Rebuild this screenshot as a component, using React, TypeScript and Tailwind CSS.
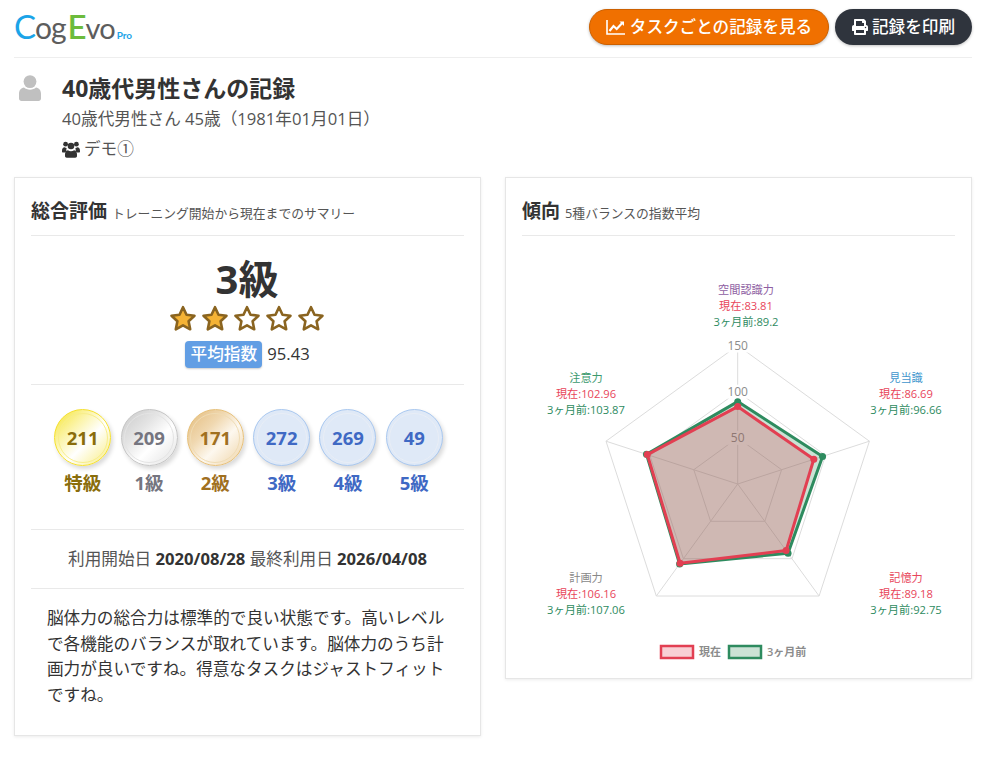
import { FaPrint } from 'react-icons/fa';

const font = { fontFamily: '"Open Sans", "Noto Sans CJK JP", sans-serif' };

const medals = [
  { count: 211, label: '特級', color: 'text-[#8a6d0b]', ring: 'border-[#f5e02c]', inner: 'border-[#f8ee8a]', bg: 'bg-[linear-gradient(135deg,#f6e431_0%,#fbf3a0_30%,#ffffff_58%,#f8ec7a_100%)]' },
  { count: 209, label: '1級', color: 'text-[#75757f]', ring: 'border-[#c4c4c4]', inner: 'border-[#e4e4e4]', bg: 'bg-[linear-gradient(135deg,#c8c8c8_0%,#e4e4e4_35%,#ffffff_60%,#e0e0e0_100%)]' },
  { count: 171, label: '2級', color: 'text-[#a0701f]', ring: 'border-[#e6bf78]', inner: 'border-[#f0dcb4]', bg: 'bg-[linear-gradient(135deg,#e3bb7c_0%,#f0d8b0_35%,#fdf8ef_60%,#eed2a3_100%)]' },
  { count: 272, label: '3級', color: 'text-[#3f69c4]', ring: 'border-[#a9c8f0]', inner: 'border-[#e9eef6]', bg: 'bg-[#dfe9f7]' },
  { count: 269, label: '4級', color: 'text-[#3f69c4]', ring: 'border-[#a9c8f0]', inner: 'border-[#e9eef6]', bg: 'bg-[#dfe9f7]' },
  { count: 49, label: '5級', color: 'text-[#3f69c4]', ring: 'border-[#a9c8f0]', inner: 'border-[#e9eef6]', bg: 'bg-[#dfe9f7]' },
];

const Star = ({ filled }: { filled: boolean }) => (
  <svg width="32" height="28" viewBox="0 0 32 28">
    <path
      d="M16 3.2l3.5 7.5 8 1-5.9 5.6 1.6 8-7.2-4-7.2 4 1.6-8-5.9-5.6 8-1z"
      fill={filled ? '#f5b335' : '#ffffff'}
      stroke="#8a6420"
      strokeWidth="2.6"
      strokeLinejoin="round"
    />
  </svg>
);

const UserIcon = () => (
  <svg width="22" height="26" viewBox="0 0 22 26" fill="#c0c0c0">
    <circle cx="11" cy="6.6" r="6.4" />
    <path d="M5 12.5c1.6 1.4 3.6 2.2 6 2.2s4.400-.8 6-2.200c3 .4 5 2.800 5 6.300v4.700c0 1.400-1.100 2.500-2.500 2.500h-17c-1.400 0-2.500-1.100-2.500-2.500v-4.700c0-3.500 2-5.900 5-6.300z" />
  </svg>
);

const GroupIcon = () => (
  <svg width="18" height="17" viewBox="0 0 18 17" fill="#333333">
    <circle cx="3.6" cy="3.2" r="2.4" />
    <circle cx="14.400" cy="3.200" r="2.400" />
    <circle cx="9" cy="5" r="3.300" />
    <path d="M0 10c0-2.400 1-3.700 2.600-3.700.6.500 1.300.7 2 .8-.4 1-.4 2.200-.2 3.400-.6.300-1.200.7-1.600 1.100H1c-.6 0-1-.5-1-1.100z" />
    <path d="M18 10c0-2.400-1-3.700-2.600-3.700-.6.500-1.300.7-2 .8.400 1 .4 2.200.2 3.400.6.300 1.200.700 1.600 1.100H17c.6 0 1-.5 1-1.100z" />
    <path d="M5.900 9.300c.9.700 2 1 3.100 1s2.200-.3 3.100-1c1.900.2 2.900 1.800 2.900 4.200v1.600c0 1-.8 1.700-1.700 1.700H4.700c-.9 0-1.700-.7-1.700-1.700v-1.600c0-2.400 1-4 2.900-4.200z" />
  </svg>
);

const LineChartIcon = () => (
  <svg width="19" height="15" viewBox="0 0 19 15" fill="none" stroke="#ffffff">
    <path d="M1 0v14h18" strokeWidth="1.600" />
    <path d="M3.500 11l4-5 3.200 3 6-6.500" strokeWidth="2.200" />
    <path d="M13.500 1.500h4.500v4.500z" fill="#ffffff" stroke="none" />
  </svg>
);

const cx = 231.7;
const cy = 248;
const perUnit = 138.5 / 150;

const point = (i: number, value: number) => {
  const a = (-90 + i * 72) * (Math.PI / 180);
  const r = value * perUnit;
  return [cx + r * Math.cos(a), cy + r * Math.sin(a)];
};
const poly = (vals: number[]) => vals.map((v, i) => point(i, v).map((n) => n.toFixed(1)).join(',')).join(' ');

const current = [83.81, 86.69, 89.18, 106.16, 102.96];
const before = [89.2, 96.66, 92.75, 107.06, 103.87];

const axisLabels = [
  { x: 240, y: 58, name: '空間認識力', color: '#8e5ea2', a: '現在:83.81', b: '3ヶ月前:89.2' },
  { x: 400, y: 146, name: '見当識', color: '#3e95cd', a: '現在:86.69', b: '3ヶ月前:96.66' },
  { x: 400, y: 346, name: '記憶力', color: '#e8455a', a: '現在:89.18', b: '3ヶ月前:92.75' },
  { x: 80, y: 346, name: '計画力', color: '#888888', a: '現在:106.16', b: '3ヶ月前:107.06' },
  { x: 80, y: 146, name: '注意力', color: '#3c9a6e', a: '現在:102.96', b: '3ヶ月前:103.87' },
];

const RadarChart = () => (
  <svg width="465" height="442" viewBox="0 0 465 442" className="block" style={font}>
    {[50, 100, 150].map((v) => (
      <polygon key={v} points={poly([v, v, v, v, v])} fill="none" stroke="#dcdcdc" strokeWidth="1" />
    ))}
    {[0, 1, 2, 3, 4].map((i) => {
      const [x, y] = point(i, 150);
      return <line key={i} x1={cx} y1={cy} x2={x} y2={y} stroke="#dcdcdc" strokeWidth="1" />;
    })}
    {[50, 100, 150].map((v) => (
      <g key={v}>
        <rect x={cx - 12} y={cy - v * perUnit - 7} width="24" height="14" fill="#ffffff" />
        <text x={cx} y={cy - v * perUnit + 4} textAnchor="middle" fontSize="12" fill="#8c8c8c">
          {v}
        </text>
      </g>
    ))}
    <polygon points={poly(before)} fill="rgba(46,139,87,0.25)" stroke="#2e8b5f" strokeWidth="3" strokeLinejoin="round" />
    <polygon points={poly(current)} fill="rgba(220,60,80,0.25)" stroke="#e23f52" strokeWidth="3" strokeLinejoin="round" />
    {before.map((v, i) => {
      const [x, y] = point(i, v);
      return <circle key={i} cx={x} cy={y} r="3.500" fill="#2e8b5f" />;
    })}
    {current.map((v, i) => {
      const [x, y] = point(i, v);
      return <circle key={i} cx={x} cy={y} r="3.500" fill="#e23f52" />;
    })}
    {axisLabels.map((l) => (
      <g key={l.name} textAnchor="middle" fontSize="11.200">
        <text x={l.x} y={l.y} fill={l.color}>{l.name}</text>
        <text x={l.x} y={l.y + 16} fill="#e8455a">{l.a}</text>
        <text x={l.x} y={l.y + 32} fill="#2e8b5f">{l.b}</text>
      </g>
    ))}
    <rect x="155" y="410" width="32" height="12" fill="rgba(226,63,82,0.25)" stroke="#e23f52" strokeWidth="2.500" />
    <text x="193" y="420" fontSize="11" fontWeight="600" fill="#8c8c8c">現在</text>
    <rect x="223" y="410" width="32" height="12" fill="rgba(46,139,87,0.25)" stroke="#2e8b5f" strokeWidth="2.500" />
    <text x="261" y="420" fontSize="11" fontWeight="600" fill="#8c8c8c">3ヶ月前</text>
  </svg>
);

const App = () => {
  return (
    <div className="w-[984px] min-h-[766px] bg-white pl-[14px] pr-[12px] pt-[9px] text-[#333] text-[16.64px]" style={font}>
      <header className="flex items-start justify-between h-[49px] border-b border-[#eeeeee]">
        <div className="flex items-baseline pt-[1px] leading-none select-none text-[30px] text-[#5d5d5d] tracking-[-1px]" style={{ fontFamily: '"Lato", sans-serif' }}>
          <span className="text-[33px] font-normal text-[#1ba4e8]">C</span>
          <span>og</span>
          <span className="text-[33px] font-semibold text-[#6cbb3c] ml-[2px]">E</span>
          <span className="text-[29px]">vo</span>
          <span className="text-[10px] font-bold text-[#1ba4e8] ml-[2px] tracking-normal">Pro</span>
        </div>
        <div className="flex items-center gap-[6px]">
          <button className="flex items-center gap-[5px] h-[36px] w-[240px] justify-center rounded-full bg-[#f07000] border border-[#cc6000] text-white text-[16.600px] font-medium shadow-[0_1px_3px_rgba(0,0,0,0.25)]">
            <LineChartIcon />
            タスクごとの記録を見る
          </button>
          <button className="flex items-center gap-[4px] h-[36px] w-[137px] justify-center rounded-full bg-[#2f343d] text-white text-[16.600px] font-medium shadow-[0_1px_3px_rgba(0,0,0,0.25)]">
            <FaPrint className="text-[16px]" />
            記録を印刷
          </button>
        </div>
      </header>

      <section className="flex h-[119px] pt-[13px]">
        <div className="w-[48px] pt-[4px] pl-[5px]">
          <UserIcon />
        </div>
        <div>
          <h1 className="text-[23px] font-bold leading-[34px] text-[#333]">40歳代男性さんの記録</h1>
          <p className="leading-[24px] mt-[2px] text-[#555]">40歳代男性さん 45歳（1981年01月01日）</p>
          <p className="flex items-center gap-[4px] leading-[24px] mt-[6px] text-[#555]">
            <GroupIcon />
            デモ①
          </p>
        </div>
      </section>

      <main className="flex items-start gap-[24px]">
        <div className="w-[467px] h-[559px] shrink-0 border border-[#e6e6e6] bg-white px-[16px] shadow-[0_1px_3px_rgba(0,0,0,0.08)]">
          <div className="h-[58px] border-b border-[#e9e9e9] pt-[19px] leading-[28px]">
            <span className="text-[19px] font-bold">総合評価</span>
            <span className="text-[12.800px] text-[#555] ml-[5px]">トレーニング開始から現在までのサマリー</span>
          </div>
          <div className="h-[149px] border-b border-[#e9e9e9] flex flex-col items-center">
            <div className="text-[40px] font-bold leading-[54px] mt-[16px] mr-[1px]">3級</div>
            <div className="flex mt-[-2px] mr-[2px]">
              <Star filled />
              <Star filled />
              <Star filled={false} />
              <Star filled={false} />
              <Star filled={false} />
            </div>
            <div className="flex items-center gap-[5px] mt-[9px]">
              <span className="bg-[#629ee4] text-white font-medium rounded-[4px] h-[27px] w-[77px] flex items-center justify-center shadow-[0_1px_2px_rgba(0,0,0,0.2)]">平均指数</span>
              <span className="text-[#333]">95.43</span>
            </div>
          </div>
          <div className="h-[145px] border-b border-[#e9e9e9] flex justify-center pt-[24px] pl-[2px]">
            {medals.map((m) => (
              <div key={m.label} className="w-[66.330px] flex flex-col items-center">
                <div className={`w-[57px] h-[57px] rounded-full border-[1.500px] ${m.ring} ${m.bg} shadow-[2px_3px_4px_rgba(0,0,0,0.15)] flex items-center justify-center`}>
                  <div className={`w-[50px] h-[50px] rounded-full border ${m.inner} flex items-center justify-center text-[18.500px] font-bold ${m.color}`}>
                    {m.count}
                  </div>
                </div>
                <div className={`text-[18.500px] font-bold leading-[26px] mt-[4px] ${m.color}`}>{m.label}</div>
              </div>
            ))}
          </div>
          <div className="h-[59px] border-b border-[#e9e9e9] flex items-center justify-center text-[#555]">
            利用開始日&nbsp;<b className="font-bold text-[#333]">2020/08/28</b>&nbsp;最終利用日&nbsp;<b className="font-bold text-[#333]">2026/04/08</b>
          </div>
          <p className="px-[16px] pt-[16px] leading-[25.500px] text-[#333]">
            脳体力の総合力は標準的で良い状態です。高いレベルで各機能のバランスが取れています。脳体力のうち計画力が良いですね。得意なタスクはジャストフィットですね。
          </p>
        </div>

        <div className="w-[467px] h-[502px] shrink-0 border border-[#e6e6e6] bg-white shadow-[0_1px_3px_rgba(0,0,0,0.08)]">
          <div className="mx-[16px] h-[58px] border-b border-[#e9e9e9] pt-[19px] leading-[28px]">
            <span className="text-[19px] font-bold">傾向</span>
            <span className="text-[12.800px] text-[#555] ml-[5px]">5種バランスの指数平均</span>
          </div>
          <RadarChart />
        </div>
      </main>
    </div>
  );
};

export default App;
